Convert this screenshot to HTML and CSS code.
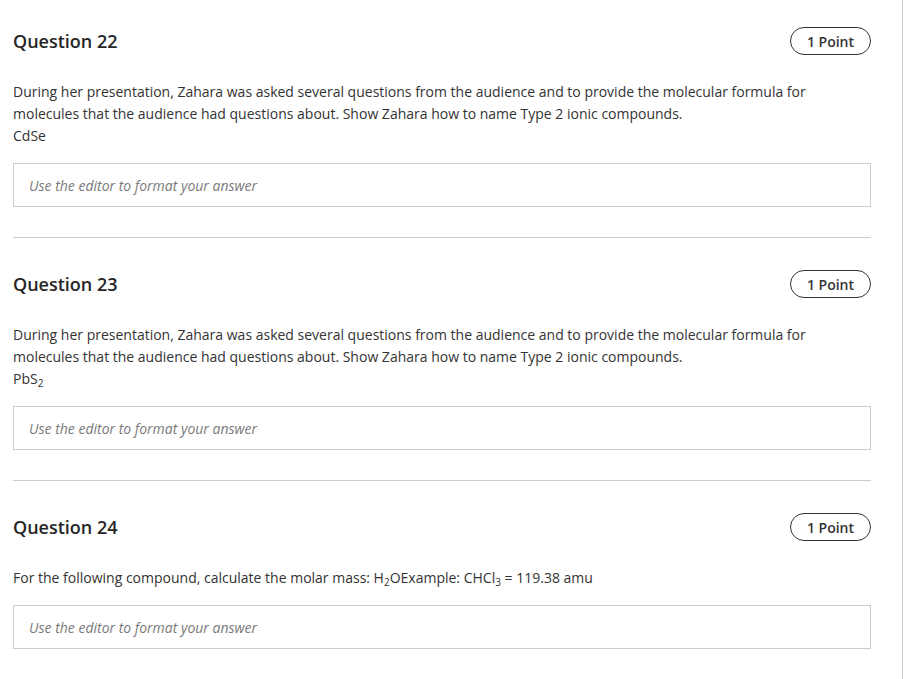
FILE: index.html
```html
<!DOCTYPE html>
<html>
<head>
<meta charset="utf-8">
<link rel="stylesheet" href="styles.css">
</head>
<body>
<div class="page">
  <section class="question">
    <div class="q-head">
      <h2 class="q-title">Question 22</h2>
      <span class="points">1 Point</span>
    </div>
    <div class="q-text">
      <p>During her presentation, Zahara was asked several questions from the audience and to provide the molecular formula for molecules that the audience had questions about. Show Zahara how to name Type 2 ionic compounds.</p>
      <p>CdSe</p>
    </div>
    <div class="answer">Use the editor to format your answer</div>
  </section>
  <hr class="sep">
  <section class="question">
    <div class="q-head">
      <h2 class="q-title">Question 23</h2>
      <span class="points">1 Point</span>
    </div>
    <div class="q-text">
      <p>During her presentation, Zahara was asked several questions from the audience and to provide the molecular formula for molecules that the audience had questions about. Show Zahara how to name Type 2 ionic compounds.</p>
      <p>PbS<sub>2</sub></p>
    </div>
    <div class="answer">Use the editor to format your answer</div>
  </section>
  <hr class="sep">
  <section class="question">
    <div class="q-head">
      <h2 class="q-title">Question 24</h2>
      <span class="points">1 Point</span>
    </div>
    <div class="q-text">
      <p>For the following compound, calculate the molar mass: H<sub>2</sub>OExample: CHCl<sub>3</sub> = 119.38 amu</p>
    </div>
    <div class="answer">Use the editor to format your answer</div>
  </section>
</div>
</body>
</html>
```
FILE: styles.css
```css
html, body {
  margin: 0;
  padding: 0;
  background: #fff;
}
body {
  font-family: "Open Sans", "Liberation Sans", sans-serif;
  color: #333;
}
.page {
  box-sizing: border-box;
  width: 903px;
  min-height: 679px;
  border-right: 1px solid #cfcfcf;
  padding: 27px 31px 0 13px;
}
.question {
  display: flex;
  flex-direction: column;
}
.q-head {
  display: flex;
  align-items: center;
  justify-content: space-between;
  height: 28px;
}
.q-title {
  margin: 0;
  font-size: 18px;
  font-weight: 600;
  color: #262626;
  line-height: 28px;
}
.points {
  box-sizing: border-box;
  height: 28px;
  width: 81px;
  border: 1px solid #333;
  border-radius: 14px;
  font-size: 14px;
  font-weight: 600;
  color: #333;
  display: flex;
  align-items: center;
  justify-content: center;
}
.q-text {
  margin-top: 26px;
  font-size: 14px;
  line-height: 22px;
  color: #333;
}
.q-text p {
  margin: 0;
}
.q-text sub {
  font-size: 10px;
  line-height: 0;
  vertical-align: -3px;
}
.answer {
  margin-top: 16px;
  box-sizing: border-box;
  height: 44px;
  border: 1px solid #cccccc;
  padding: 0 15px;
  display: flex;
  align-items: center;
  font-size: 14px;
  font-style: italic;
  color: #7a7a7a;
}
.sep {
  margin: 30px 0 32px;
  border: 0;
  border-top: 1px solid #cccccc;
  height: 0;
}
```
